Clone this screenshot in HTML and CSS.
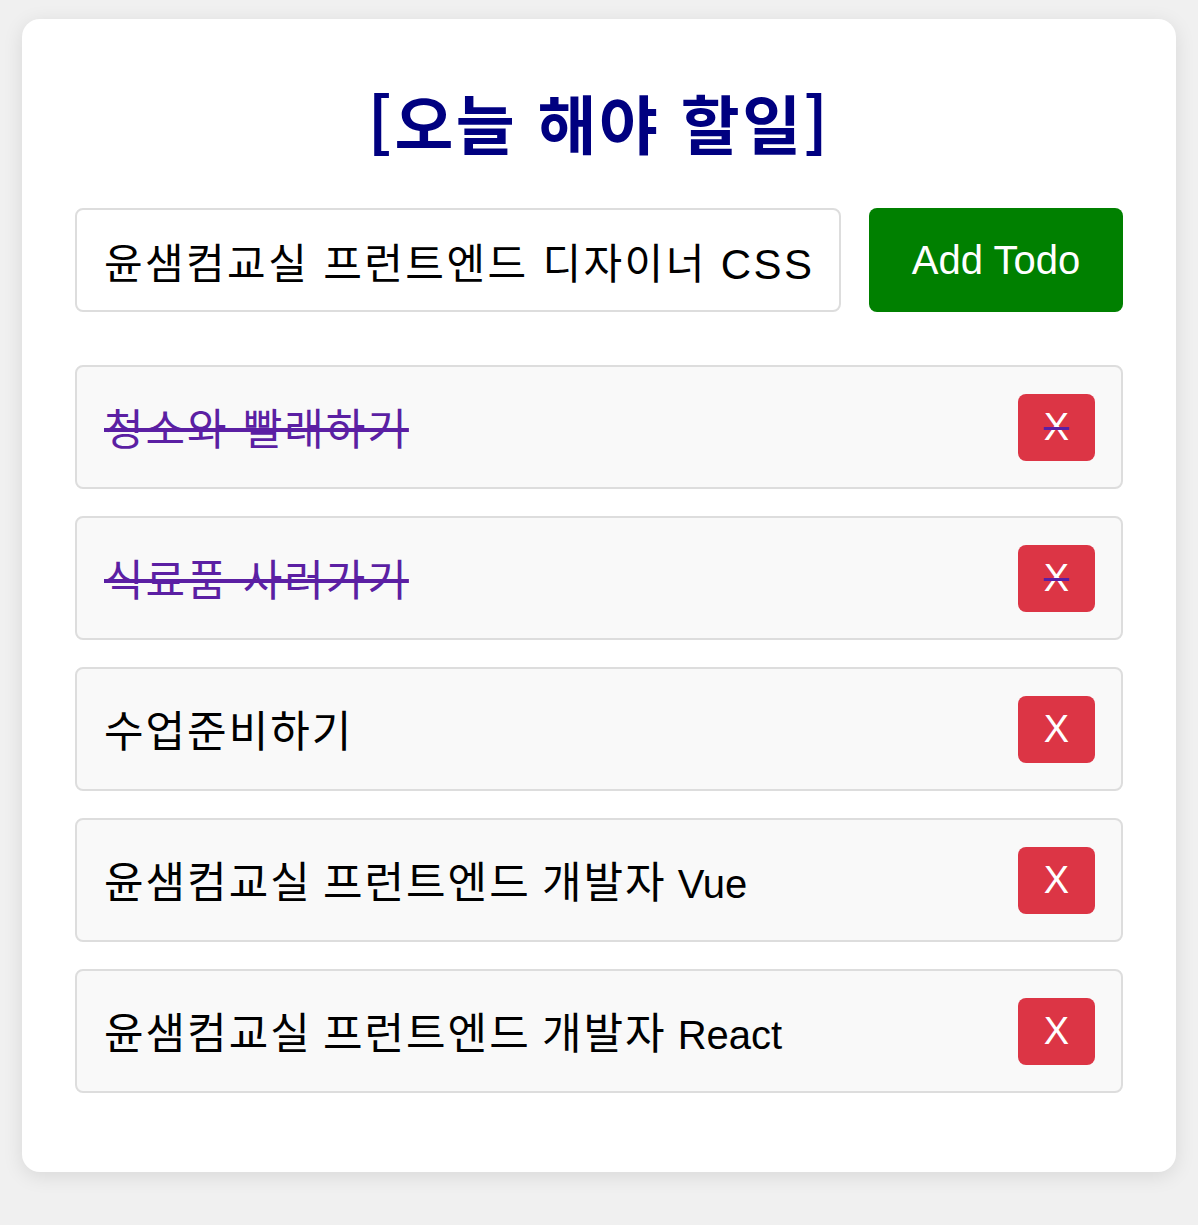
FILE: index.html
```html
<!DOCTYPE html>
<html lang="ko">
<head>
<meta charset="utf-8">
<title>오늘 해야 할일</title>
<link rel="stylesheet" href="styles.css">
</head>
<body>
<div class="card">
  <h1 class="title">[오늘 해야 할일]</h1>
  <div class="form">
    <input class="todo-input" type="text" value="윤샘컴교실 프런트엔드 디자이너 CSS">
    <button class="add-btn">Add Todo</button>
  </div>
  <ul class="list">
    <li class="item done"><span class="item-text"><span class="ko">청소와 빨래하기</span></span><button class="del-btn">X</button></li>
    <li class="item done"><span class="item-text"><span class="ko">식료품 사러가기</span></span><button class="del-btn">X</button></li>
    <li class="item"><span class="item-text"><span class="ko">수업준비하기</span></span><button class="del-btn">X</button></li>
    <li class="item"><span class="item-text"><span class="ko">윤샘컴교실</span> <span class="ko">프런트엔드</span> <span class="ko">개발자</span> Vue</span><button class="del-btn">X</button></li>
    <li class="item"><span class="item-text"><span class="ko">윤샘컴교실</span> <span class="ko">프런트엔드</span> <span class="ko">개발자</span> React</span><button class="del-btn">X</button></li>
  </ul>
</div>
</body>
</html>
```

FILE: styles.css
```css
* { box-sizing: border-box; }

html, body {
  margin: 0;
  padding: 0;
}

body {
  background: #f0f0f0;
  padding: 19px 22px 52px;
  font-family: "Liberation Sans", "Noto Sans CJK KR", Arial, sans-serif;
  font-size: 40px;
  color: #000;
}

.card {
  background: #fff;
  border-radius: 18px;
  box-shadow: 0 4px 20px rgba(0, 0, 0, 0.1);
  padding: 53px 53px 53px;
}

.title {
  margin: 10px 0 48px;
  text-align: center;
  font-family: "Noto Sans CJK KR", sans-serif;
  font-weight: 700;
  font-size: 64px;
  line-height: 78px;
  letter-spacing: 2.5px;
  color: #000080;
}

.form {
  display: flex;
  gap: 28px;
}

.todo-input {
  flex: 1;
  min-width: 0;
  height: 104px;
  border: 2px solid #ddd;
  border-radius: 8px;
  padding: 0 27px;
  font-family: "Liberation Sans", "Noto Sans CJK KR", sans-serif;
  font-size: 42px;
  letter-spacing: 2.4px;
  color: #000;
  background: #fff;
  outline: none;
}

.add-btn {
  width: 254px;
  height: 104px;
  border: none;
  border-radius: 8px;
  background: #008000;
  color: #fff;
  font-family: "Liberation Sans", sans-serif;
  font-size: 40px;
  padding: 0;
}

.list {
  list-style: none;
  margin: 53px 0 26px;
  padding: 0;
  display: flex;
  flex-direction: column;
  gap: 27px;
}

.item {
  display: flex;
  align-items: center;
  justify-content: space-between;
  height: 124px;
  padding: 0 26px 0 27px;
  background: #f9f9f9;
  border: 2px solid #ddd;
  border-radius: 8px;
  font-size: 40px;
}

.item-text {
  line-height: 48px;
  padding-top: 6px;
}

.ko {
  font-size: 43px;
  letter-spacing: 2px;
}

.item.done {
  color: #5b1fa3;
  text-decoration: line-through;
}

.del-btn {
  width: 77px;
  height: 67px;
  border: none;
  border-radius: 8px;
  background: #dc3545;
  color: #fff;
  font-family: "Liberation Sans", sans-serif;
  font-size: 38px;
  padding: 0;
}
```
